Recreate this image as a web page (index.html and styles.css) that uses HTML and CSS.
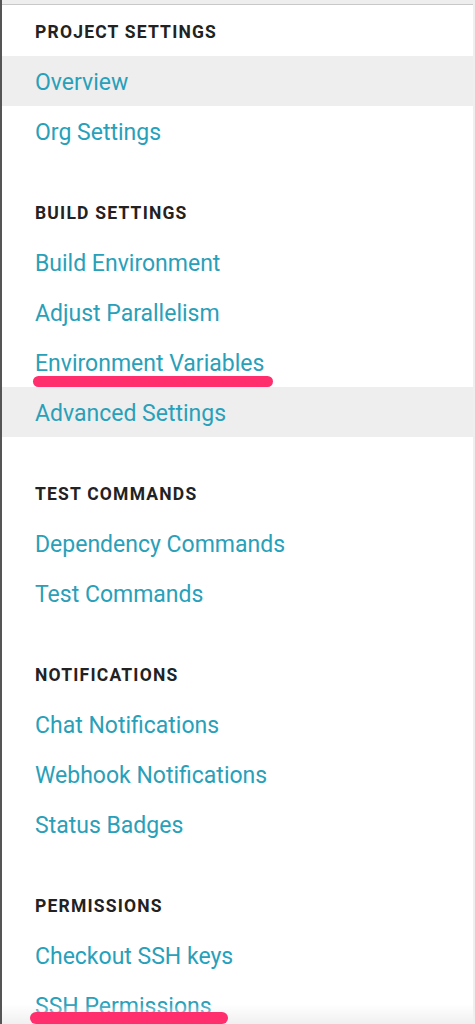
FILE: index.html
```html
<!DOCTYPE html>
<html lang="en">
<head>
    <meta charset="UTF-8">
    <meta name="viewport" content="width=device-width, initial-scale=1.0">
    <title>Project Settings</title>
    <link rel="stylesheet" href="styles.css">
</head>
<body>
    <div class="topbar"></div>
    <nav class="sidebar">
        <section class="group">
            <h3 class="group-title">Project Settings</h3>
            <ul class="links">
                <li class="active"><a href="#">Overview</a></li>
                <li><a href="#">Org Settings</a></li>
            </ul>
        </section>
        <section class="group">
            <h3 class="group-title">Build Settings</h3>
            <ul class="links">
                <li><a href="#">Build Environment</a></li>
                <li><a href="#">Adjust Parallelism</a></li>
                <li><a href="#" class="marked marked-env">Environment Variables</a></li>
                <li class="active"><a href="#">Advanced Settings</a></li>
            </ul>
        </section>
        <section class="group">
            <h3 class="group-title">Test Commands</h3>
            <ul class="links">
                <li><a href="#">Dependency Commands</a></li>
                <li><a href="#">Test Commands</a></li>
            </ul>
        </section>
        <section class="group">
            <h3 class="group-title">Notifications</h3>
            <ul class="links">
                <li><a href="#">Chat Notifications</a></li>
                <li><a href="#">Webhook Notifications</a></li>
                <li><a href="#">Status Badges</a></li>
            </ul>
        </section>
        <section class="group">
            <h3 class="group-title">Permissions</h3>
            <ul class="links">
                <li><a href="#">Checkout SSH keys</a></li>
                <li><a href="#" class="marked marked-ssh">SSH Permissions</a></li>
            </ul>
        </section>
    </nav>
    <div class="fade"></div>
</body>
</html>
```

FILE: styles.css
```css
html {
    background: #fff;
}
body {
    margin: 0;
    padding: 0;
    font-family: Roboto, "Liberation Sans", sans-serif;
    border-left: 2px solid #555;
    border-right: 2px solid #efefef;
    min-height: 1024px;
    box-sizing: border-box;
    overflow: hidden;
}
.topbar {
    height: 4px;
    background: #eeeeee;
    border-bottom: 1px solid #c8c8c8;
}
.sidebar {
    padding-top: 1px;
}
.group + .group {
    margin-top: 31px;
}
.group-title {
    margin: 0;
    height: 50px;
    line-height: 52px;
    padding-left: 33px;
    font-size: 17.5px;
    font-weight: 700;
    letter-spacing: 1.2px;
    text-transform: uppercase;
    color: #222;
}
.links {
    list-style: none;
    margin: 0;
    padding: 0;
}
.links li {
    height: 50px;
    line-height: 53px;
    padding-left: 33px;
}
.links li.active {
    background: #eeeeee;
}
.links a {
    position: relative;
    font-size: 23px;
    color: #29a0b9;
    text-decoration: none;
}
/* red marker strokes drawn over the links */
.marked::after {
    content: "";
    position: absolute;
    z-index: 2;
    height: 11px;
    border-radius: 6px;
    background: #ff2e6c;
}
.marked-env::after {
    left: -2px;
    width: 240px;
    top: 26px;
}
.marked-ssh::after {
    left: -5px;
    width: 198px;
    top: 19px;
    height: 12px;
}
.fade {
    position: fixed;
    z-index: 1;
    left: 2px;
    right: 0;
    bottom: 0;
    height: 20px;
    background: linear-gradient(rgba(242, 242, 242, 0), #f0f0f0);
    pointer-events: none;
}
```
